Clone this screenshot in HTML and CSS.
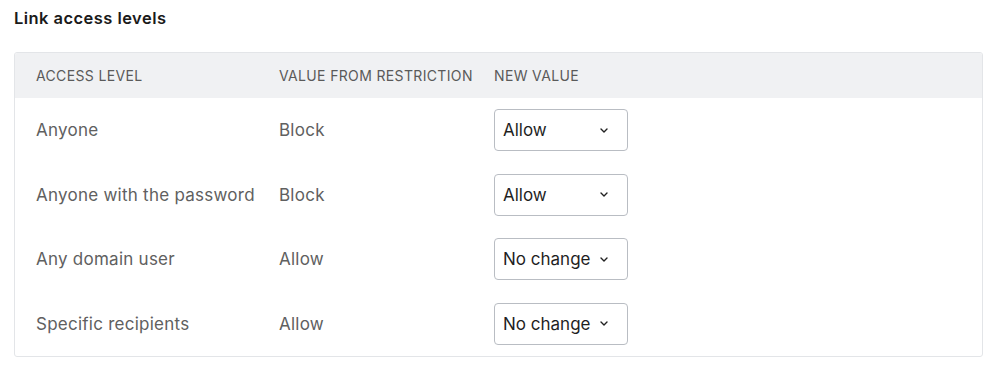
FILE: index.html
```html
<!DOCTYPE html>
<html lang="en">
<head>
  <meta charset="UTF-8">
  <title>Link access levels</title>
  <link rel="stylesheet" href="styles.css">
</head>
<body>
  <h3 class="title">Link access levels</h3>
  <div class="levels">
    <div class="row head">
      <div>ACCESS LEVEL</div>
      <div>VALUE FROM RESTRICTION</div>
      <div>NEW VALUE</div>
    </div>
    <div class="row">
      <div>Anyone</div>
      <div>Block</div>
      <div><div class="select"><span>Allow</span><svg width="8" height="5" viewBox="0 0 8 5"><path d="M1 1l3 3 3-3" fill="none" stroke="#222" stroke-width="1.4" stroke-linecap="round" stroke-linejoin="round"/></svg></div></div>
    </div>
    <div class="row">
      <div>Anyone with the password</div>
      <div>Block</div>
      <div><div class="select"><span>Allow</span><svg width="8" height="5" viewBox="0 0 8 5"><path d="M1 1l3 3 3-3" fill="none" stroke="#222" stroke-width="1.4" stroke-linecap="round" stroke-linejoin="round"/></svg></div></div>
    </div>
    <div class="row">
      <div>Any domain user</div>
      <div>Allow</div>
      <div><div class="select"><span>No change</span><svg width="8" height="5" viewBox="0 0 8 5"><path d="M1 1l3 3 3-3" fill="none" stroke="#222" stroke-width="1.4" stroke-linecap="round" stroke-linejoin="round"/></svg></div></div>
    </div>
    <div class="row">
      <div>Specific recipients</div>
      <div>Allow</div>
      <div><div class="select"><span>No change</span><svg width="8" height="5" viewBox="0 0 8 5"><path d="M1 1l3 3 3-3" fill="none" stroke="#222" stroke-width="1.4" stroke-linecap="round" stroke-linejoin="round"/></svg></div></div>
    </div>
  </div>
</body>
</html>
```

FILE: styles.css
```css
body {
  margin: 0;
  padding: 0 16px 0 14px;
  font-family: Inter, "Noto Sans", sans-serif;
  background: #fff;
  color: #222;
}
.title {
  margin: 0;
  padding-top: 8px;
  height: 52px;
  box-sizing: border-box;
  font-size: 16.5px;
  font-weight: 600;
  letter-spacing: 0.45px;
  color: #1a1a1a;
}
.levels {
  border: 1px solid #e3e5e8;
  border-radius: 3px;
  overflow: hidden;
}
.row {
  display: grid;
  grid-template-columns: 243px 215px 1fr;
  align-items: center;
  padding-left: 21px;
  height: 64.5px;
  font-size: 17px;
  letter-spacing: 0.25px;
  color: #606060;
}
.row.head {
  height: 45px;
  background: #f0f1f3;
  font-size: 14px;
  letter-spacing: 0.35px;
  color: #5a5a5a;
}
.select {
  display: flex;
  align-items: center;
  justify-content: space-between;
  width: 134px;
  height: 42px;
  box-sizing: border-box;
  padding: 0 19px 0 8px;
  border: 1px solid #b9bdc3;
  border-radius: 4px;
  color: #1f1f1f;
  font-size: 17px;
  letter-spacing: 0;
}
.select svg {
  flex-shrink: 0;
}
```
